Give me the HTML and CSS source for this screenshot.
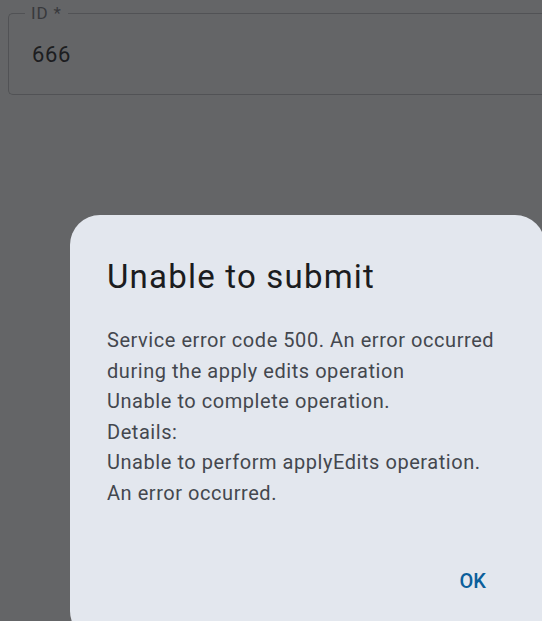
FILE: index.html
```html
<!DOCTYPE html>
<html lang="en">
<head>
<meta charset="utf-8">
<link rel="stylesheet" href="styles.css">
</head>
<body>
<div class="page">
  <fieldset class="field">
    <legend class="field-label">ID *</legend>
    <div class="field-value">666</div>
  </fieldset>
</div>
<div class="dialog" role="dialog">
  <h1 class="dialog-title">Unable to submit</h1>
  <div class="dialog-body">
    <div>Service error code 500. An error occurred</div>
    <div>during the apply edits operation</div>
    <div>Unable to complete operation.</div>
    <div>Details:</div>
    <div>Unable to perform applyEdits operation.</div>
    <div>An error occurred.</div>
  </div>
  <div class="dialog-actions">
    <button class="btn-ok" type="button">OK</button>
  </div>
</div>
</body>
</html>
```
FILE: styles.css
```css
html, body {
  margin: 0;
  padding: 0;
  width: 542px;
  height: 621px;
  overflow: hidden;
}
body {
  background: #646567;
  font-family: Roboto, "Noto Sans", "Liberation Sans", sans-serif;
  position: relative;
}
.page {
  padding: 3px 0 0 8px;
}
.field {
  margin: 0;
  width: 534px;
  box-sizing: border-box;
  border: 1.5px solid #515255;
  border-right: 0;
  border-radius: 5px 0 0 5px;
  padding: 0 0 26px 23px;
}
.field-label {
  margin-left: -7px;
  padding: 0 6px;
  font-size: 17px;
  line-height: 20px;
  letter-spacing: 0.8px;
  color: #38393c;
}
.field-value {
  margin-top: 19px;
  font-size: 22px;
  line-height: 26px;
  letter-spacing: 0.6px;
  color: #1c1d20;
}
.dialog {
  position: absolute;
  left: 70px;
  top: 215px;
  width: 475px;
  height: 426px;
  box-sizing: border-box;
  background: #e3e7ee;
  border-radius: 30px;
  padding: 42px 20px 0 37px;
}
.dialog-title {
  margin: 0;
  font-size: 33px;
  line-height: 40px;
  font-weight: 400;
  letter-spacing: 1.2px;
  color: #1b1c20;
  white-space: nowrap;
}
.dialog-body {
  margin-top: 28px;
  font-size: 20px;
  line-height: 30.5px;
  letter-spacing: 0.55px;
  color: #44474e;
  white-space: nowrap;
}
.dialog-actions {
  margin-top: 61px;
  padding-right: 39px;
  display: flex;
  justify-content: flex-end;
}
.btn-ok {
  border: 0;
  background: none;
  padding: 0;
  font-family: inherit;
  font-size: 20px;
  line-height: 24px;
  font-weight: 500;
  color: #0b5f9b;
}
```
